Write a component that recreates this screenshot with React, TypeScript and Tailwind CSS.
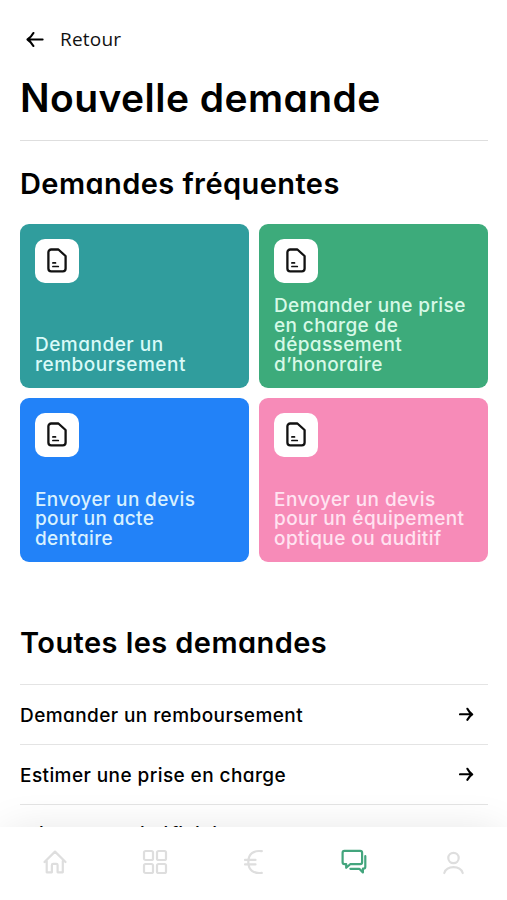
import React from "react";

const FONT = "font-['Inter','Liberation_Sans',sans-serif]";
const SINGLE_STOREY = "[font-feature-settings:'cv11']";

function DocumentIcon() {
  return (
    <svg width="20" height="25" viewBox="0 0 20 25" fill="none" stroke="#111" strokeLinecap="round" strokeLinejoin="round">
      <path d="M4.2 1.5h7.2L18.6 8v12.6a2.8 2.8 0 0 1-2.8 2.8H4.2a2.8 2.8 0 0 1-2.8-2.8V4.3a2.8 2.8 0 0 1 2.8-2.8z" strokeWidth="2.3" />
      <path d="M5.9 14.9h2.6M5.9 18.5h5.4" strokeWidth="1.7" />
    </svg>
  );
}

function RightArrow() {
  return (
    <svg width="15" height="14" viewBox="0 0 15 14" fill="none" stroke="#000" strokeWidth="2.1" strokeLinecap="round" strokeLinejoin="round">
      <path d="M0.9 7.3H13M8.4 1.8Q10 5.2 13.2 7.3Q10 9.4 8.4 12.8" />
    </svg>
  );
}

function Heading({ children, className }: { children: React.ReactNode; className: string }) {
  return (
    <h2 className={`whitespace-nowrap text-[29px] font-semibold leading-9 tracking-[0.43px] ${className}`}>{children}</h2>
  );
}

function NavIcon({ children, className = "" }: { children: React.ReactNode; className?: string }) {
  return (
    <button className={`flex justify-center ${className}`}>
      <svg width="26" height="26" viewBox="0 0 26 26" fill="none" stroke="currentColor" strokeWidth="2.2" strokeLinecap="round" strokeLinejoin="round">
        {children}
      </svg>
    </button>
  );
}

const cards = [
  { color: "bg-[#309d9d]", ink: "text-[#d9faf8]", tracking: "tracking-[0.5px]", lines: ["Demander un", "remboursement"] },
  { color: "bg-[#3dab7b]", ink: "text-[#d7f9e7]", tracking: "tracking-[0.38px]", lines: ["Demander une prise", "en charge de", "dépassement", "d’honoraire"] },
  { color: "bg-[#2282f8]", ink: "text-[#d8f1ff]", tracking: "tracking-[0.34px]", lines: ["Envoyer un devis", "pour un acte", "dentaire"] },
  { color: "bg-[#f78bb8]", ink: "text-[#ffe3f1]", tracking: "tracking-[0.42px]", lines: ["Envoyer un devis", "pour un équipement", "optique ou auditif"] },
];

const requests = ["Demander un remboursement", "Estimer une prise en charge", "Gérer mes bénéficiaires"];

export default function App() {
  return (
    <div className={`flex h-[900px] w-[507px] flex-col overflow-hidden bg-white text-black ${FONT} ${SINGLE_STOREY}`}>
      <main className="flex h-[827px] shrink-0 flex-col overflow-hidden pl-5 pr-[19px]">
        <button className="mt-[25px] flex h-[30px] items-center gap-4 self-start pl-[6px] font-['Open_Sans',sans-serif] text-[19px] font-medium tracking-[0.2px] text-[#111]">
          <svg width="18" height="16" viewBox="0 0 18 16" fill="none" stroke="#000" strokeWidth="2.1" strokeLinecap="round" strokeLinejoin="round">
            <path d="M16.6 8.5H2M7.4 2Q5.2 6.1 1.5 8.5Q5.2 10.9 7.4 15" />
          </svg>
          Retour
        </button>
        <h1 className="mt-5 whitespace-nowrap text-[39px] font-semibold leading-[48px] tracking-[0.43px]">Nouvelle demande</h1>
        <hr className="mt-[18px] border-[#dedede]" />
        <Heading className="mt-[25px]">Demandes fréquentes</Heading>
        <section className="mt-[22px] grid shrink-0 grid-cols-[229px_229px] grid-rows-[164px_164px] gap-[10px]">
          {cards.map((card, i) => (
            <article key={i} className={`flex flex-col justify-between rounded-[9px] px-[15px] pb-[13px] pt-[15px] ${card.color} ${card.ink}`}>
              <div className="flex size-11 items-center justify-center rounded-[10px] bg-white">
                <DocumentIcon />
              </div>
              <p className={`flex flex-col items-start text-[19px] font-medium leading-[19.6px] ${card.tracking}`}>
                {card.lines.map((line) => (
                  <span key={line} className="whitespace-nowrap">{line}</span>
                ))}
              </p>
            </article>
          ))}
        </section>
        <Heading className="mt-[63px]">Toutes les demandes</Heading>
        <ul className="mt-[23px]">
          {requests.map((r) => (
            <li key={r} className="group flex h-[60px] shrink-0 items-center justify-between border-t border-[#e4e4e4] pr-[14px] text-[19px] font-medium tracking-[0.42px]">
              <span className="pt-1 group-last:pt-[2px]">{r}</span>
              <RightArrow />
            </li>
          ))}
        </ul>
      </main>
      <nav className="relative grid h-[73px] shrink-0 grid-cols-5 items-center bg-white pb-[3px] pl-[5px] pr-[3px] text-[#dedede] shadow-[0_0_44px_-6px_rgba(0,0,0,0.12)]">
        <NavIcon>
          <path d="M2.5 13L13 2.6 23.5 13M4.7 12v11.3h5.2v-7.2q0-1.3 1.3-1.3h3.1q1.3 0 1.3 1.3v7.2h5.2V12" />
        </NavIcon>
        <NavIcon>
          <rect x="2" y="2" width="9" height="9" rx="1.6" />
          <rect x="15" y="2" width="9" height="9" rx="1.6" />
          <rect x="2" y="15" width="9" height="9" rx="1.6" />
          <rect x="15" y="15" width="9" height="9" rx="1.6" />
        </NavIcon>
        <NavIcon>
          <path d="M20.8 2.2C12.5 1 7.3 5.2 7.3 13s5.2 12 13.5 10.8M4 10.9h10.5M4 15.4h10.5" />
        </NavIcon>
        <NavIcon className="text-[#43a57d]">
          <path d="M3.4 1.8h15.8q1.9 0 1.9 1.9v9.6q0 1.9-1.9 1.9H9.2L5.2 18.8v-3.6H3.5q-1.9 0-1.9-1.9V3.7q0-1.9 1.8-1.9z" />
          <path d="M24.3 7.2v10.6q0 1.8-1.7 1.9h-.7v3.8l-3.6-3.7H9.4" />
        </NavIcon>
        <NavIcon>
          <circle cx="12.5" cy="9" r="5.2" />
          <path d="M3.3 24q2-5.8 9.2-5.8t9.2 5.8" />
        </NavIcon>
      </nav>
    </div>
  );
}
